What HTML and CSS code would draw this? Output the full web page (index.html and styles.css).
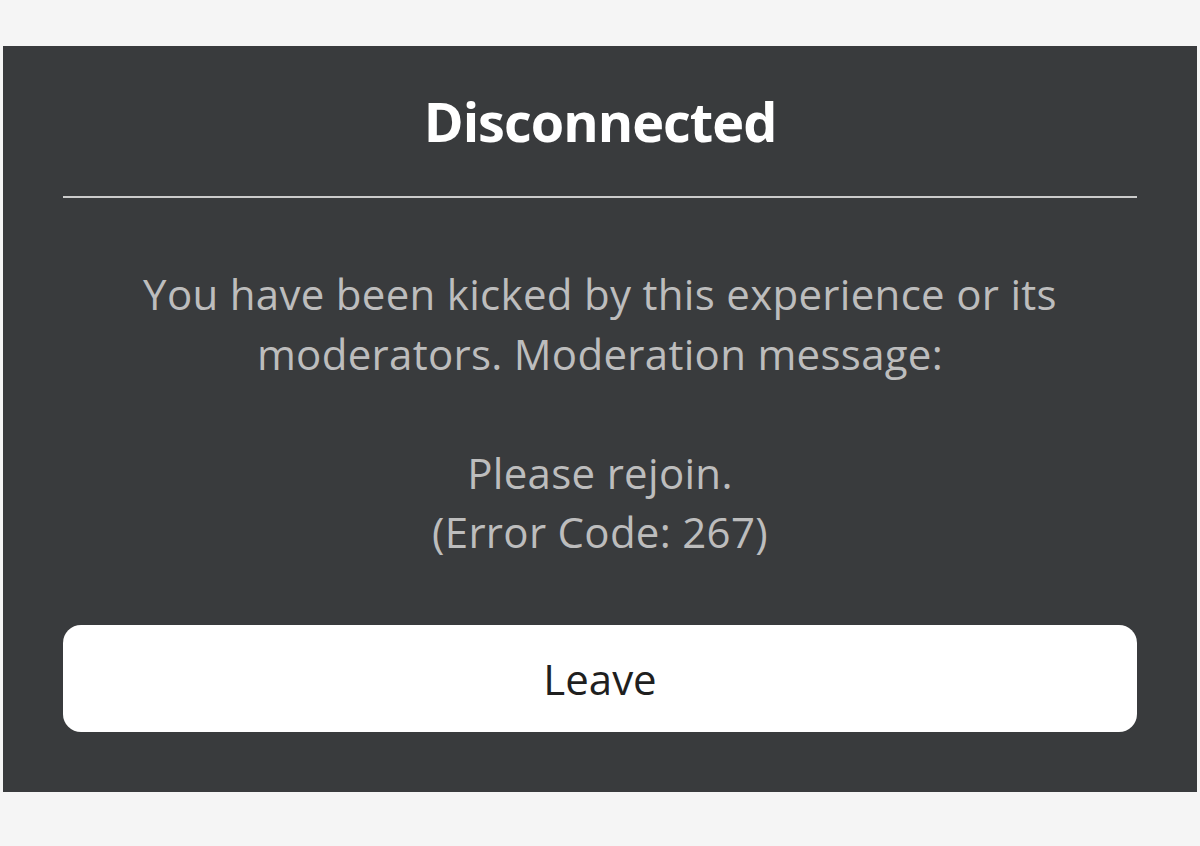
FILE: index.html
```html
<!DOCTYPE html>
<html lang="en">
<head>
<meta charset="utf-8">
<title>Disconnected</title>
<link rel="stylesheet" href="styles.css">
</head>
<body>
<div class="page">
  <section class="dialog">
    <h1 class="dialog-title">Disconnected</h1>
    <hr class="dialog-divider">
    <p class="dialog-message">You have been kicked by this experience or its<br>moderators. Moderation message:<br><br>Please rejoin.<br>(Error Code: 267)</p>
    <button class="dialog-button" type="button">Leave</button>
  </section>
</div>
</body>
</html>
```
FILE: styles.css
```css
html, body {
  margin: 0;
  padding: 0;
  background: #f5f5f5;
}
body {
  font-family: "Open Sans", "Noto Sans", sans-serif;
}
.page {
  padding: 46px 3px 0 3px;
}
.dialog {
  box-sizing: border-box;
  width: 1194px;
  height: 746px;
  background: #393b3d;
  padding: 0 60px;
  display: flex;
  flex-direction: column;
}
.dialog-title {
  margin: 48px 0 0 0;
  font-size: 54px;
  line-height: 54px;
  font-weight: 700;
  letter-spacing: -1px;
  color: #ffffff;
  text-align: center;
}
.dialog-divider {
  margin: 48px 0 0 0;
  border: 0;
  height: 2px;
  background: #cbcbcb;
}
.dialog-message {
  margin: 66px 0 0 0;
  font-size: 42px;
  line-height: 59.5px;
  letter-spacing: 0.3px;
  color: #bdbdbd;
  text-align: center;
}
.dialog-button {
  margin-top: 63.5px;
  height: 107px;
  border: 0;
  border-radius: 18px;
  background: #ffffff;
  color: #1f1f1f;
  font-family: inherit;
  font-size: 42px;
  line-height: 107px;
  padding: 0;
}
```
